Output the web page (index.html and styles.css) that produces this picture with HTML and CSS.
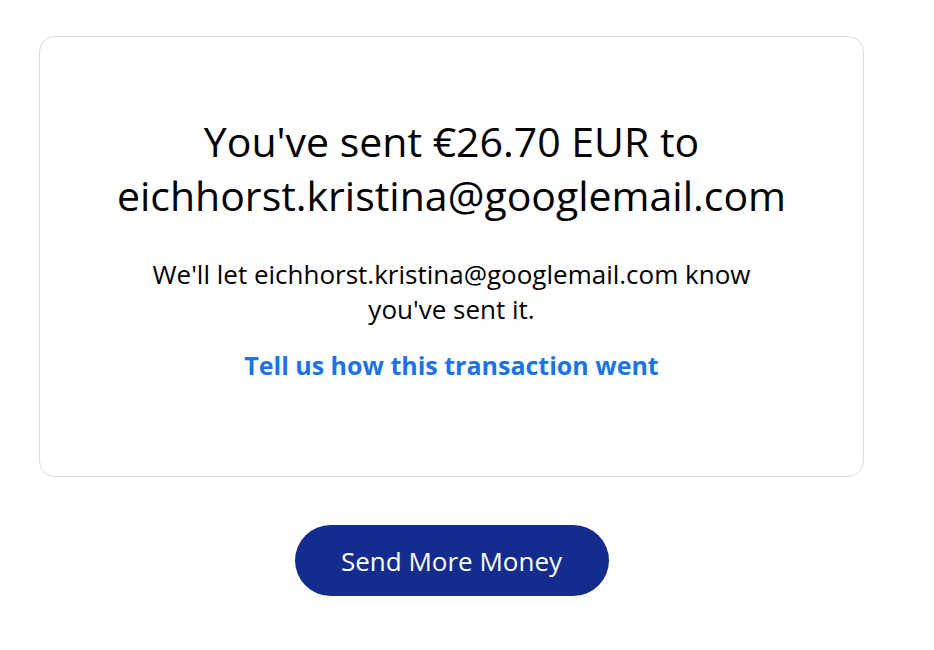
FILE: index.html
```html
<!DOCTYPE html>
<html lang="en">
<head>
<meta charset="utf-8">
<title>Money sent</title>
<link rel="stylesheet" href="styles.css">
</head>
<body>
<main class="page">
  <section class="card">
    <h1 class="title">You've sent €26.70 EUR to<br>eichhorst.kristina@googlemail.com</h1>
    <p class="note">We'll let eichhorst.kristina@googlemail.com know<br>you've sent it.</p>
    <a class="feedback" href="#">Tell us how this transaction went</a>
  </section>
  <div class="actions">
    <a class="btn" href="#">Send More Money</a>
  </div>
</main>
</body>
</html>
```
FILE: styles.css
```css
* { box-sizing: border-box; }
html, body { margin: 0; padding: 0; background: #fff; }
body { font-family: "Open Sans", "Lato", sans-serif; color: #000; }
.page { width: 825px; margin-left: 39px; padding-top: 36px; }
.card {
  border: 1px solid #dddbd3;
  border-radius: 16px;
  height: 441px;
  display: flex;
  flex-direction: column;
  align-items: center;
  text-align: center;
  padding-top: 77px;
}
.title { margin: 0; font-size: 41px; font-weight: 400; line-height: 54px; }
.note { margin: 35px 0 0; font-size: 26px; line-height: 35px; }
.feedback { margin-top: 21px; font-size: 25px; font-weight: 700; color: #1a73e8; text-decoration: none; line-height: 34px; }
.actions { display: flex; justify-content: center; margin-top: 48px; }
.btn {
  display: flex; align-items: center; justify-content: center;
  width: 314px; height: 71px; border-radius: 36px;
  background: #142c8e; color: #fff; text-decoration: none;
  font-size: 26px; font-weight: 400;
}
```
